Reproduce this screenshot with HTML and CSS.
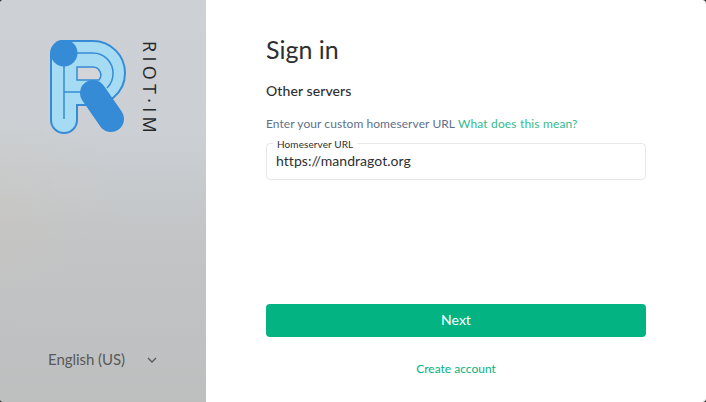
FILE: index.html
```html
<!DOCTYPE html>
<html lang="en">
<head>
<meta charset="utf-8">
<title>Sign in</title>
<link rel="stylesheet" href="styles.css">
</head>
<body>
<div class="window">
  <aside class="side">
    <div class="logo">
      <svg class="mark" width="76" height="94" viewBox="0 0 76 94" aria-hidden="true">
        <path class="r-out" d="M1 14 A13 13 0 0 1 14 1 H43 A32 32 0 0 1 75 33 A32 32 0 0 1 63 58 L50 65 H27 V80 A13 13 0 0 1 1 80 Z"/>
        <path class="r-in" d="M14 13 V79 M14 13 H43 A20 20 0 0 1 63 33 A20 20 0 0 1 57 48 M14 52 H42"/>
        <path class="r-hole" d="M27 40 V27 H43 A8 8 0 0 1 49 40 Z"/>
        <circle class="r-dot" cx="14" cy="13" r="13.500"/>
        <path class="r-stroke" d="M43 53 L61 79"/>
      </svg>
      <div class="brand">RIOT·IM</div>
    </div>
    <div class="lang">
      <span>English (US)</span>
      <svg class="chev" width="10" height="6" viewBox="0 0 10 6" aria-hidden="true"><path d="M1 1l4 4 4-4"/></svg>
    </div>
  </aside>
  <main class="main">
    <h1 class="title">Sign in</h1>
    <h2 class="sub">Other servers</h2>
    <p class="hint">Enter your custom homeserver URL <a class="link">What does this mean?</a></p>
    <div class="field">
      <label class="legend">Homeserver URL</label>
      <div class="value">https://mandragot.org</div>
    </div>
    <div class="spacer"></div>
    <button class="next">Next</button>
    <a class="create">Create account</a>
  </main>
</div>
</body>
</html>
```
FILE: styles.css
```css
* { box-sizing: border-box; }
html, body { margin: 0; padding: 0; height: 100%; }
body { background: #3a3a3a; font-family: "Lato", "Noto Sans", sans-serif; color: #2e2f32; overflow: hidden; }
.window { display: flex; width: 706px; height: 402px; background: #fff; border-radius: 4px; overflow: hidden; }
.side {
  width: 206px; flex: none; display: flex; flex-direction: column; justify-content: space-between;
  background:
    radial-gradient(120px 110px at 0 215px, rgba(205,198,186,.3), rgba(205,198,186,0)),
    linear-gradient(180deg, #cdd0d4 0%, #ccd0d4 32%, #c2c4c6 60%, #bdbfbf 100%);
  padding: 40px 0 34px;
}
.logo { display: flex; padding-left: 50px; gap: 15px; align-items: flex-start; }
.mark { display: block; flex: none; }
.r-out { fill: #a5dcf3; stroke: #368bd6; stroke-width: 2; }
.r-in { fill: none; stroke: #368bd6; stroke-width: 1.500; }
.r-hole { fill: #d3d5d9; stroke: #368bd6; stroke-width: 1.500; }
.r-dot { fill: #368bd6; }
.r-stroke { fill: none; stroke: #368bd6; stroke-width: 26; stroke-linecap: round; }
.brand { writing-mode: vertical-rl; font-family: "Open Sans", sans-serif; font-size: 18px; letter-spacing: 4.300px; line-height: 18px; color: #26282b; margin-top: 1px; }
.lang { display: flex; align-items: center; padding-left: 48px; gap: 22px; font-size: 15px; line-height: 18px; letter-spacing: -.05px; color: #57595a; }
.chev { display: block; margin-top: 2px; }
.chev path { fill: none; stroke: #57595a; stroke-width: 1.300; }
.main { flex: 1; display: flex; flex-direction: column; padding: 34px 60px 25px; }
.title { margin: 0; font-size: 25px; line-height: 30px; font-weight: 400; color: #2e2f32; }
.sub { margin: 18px 0 0; font-size: 14px; line-height: 18px; font-weight: 500; letter-spacing: .1px; color: #2e2f32; }
.hint { margin: 16px 0 0; font-size: 12px; line-height: 15px; letter-spacing: .07px; color: #61708b; }
.link { color: #35b98c; letter-spacing: .16px; }
.field { position: relative; margin-top: 12px; height: 37px; border: 1px solid #e7e7e7; border-radius: 4px; padding: 8px 9px; }
.legend { position: absolute; left: 6px; top: -6px; padding: 0 4px; background: #fff; font-size: 10px; line-height: 12px; letter-spacing: .1px; color: #2e2f32; }
.value { font-size: 14px; line-height: 18px; letter-spacing: .05px; color: #2e2f32; }
.spacer { flex: 1; }
.next { display: block; width: 100%; height: 33px; border: 0; border-radius: 4px; background: #03b381; color: #fff; font: 14px/18px "Lato", sans-serif; padding-bottom: 2px; }
.create { margin-top: 24px; text-align: center; font-size: 12px; line-height: 16px; color: #03b381; }
```
